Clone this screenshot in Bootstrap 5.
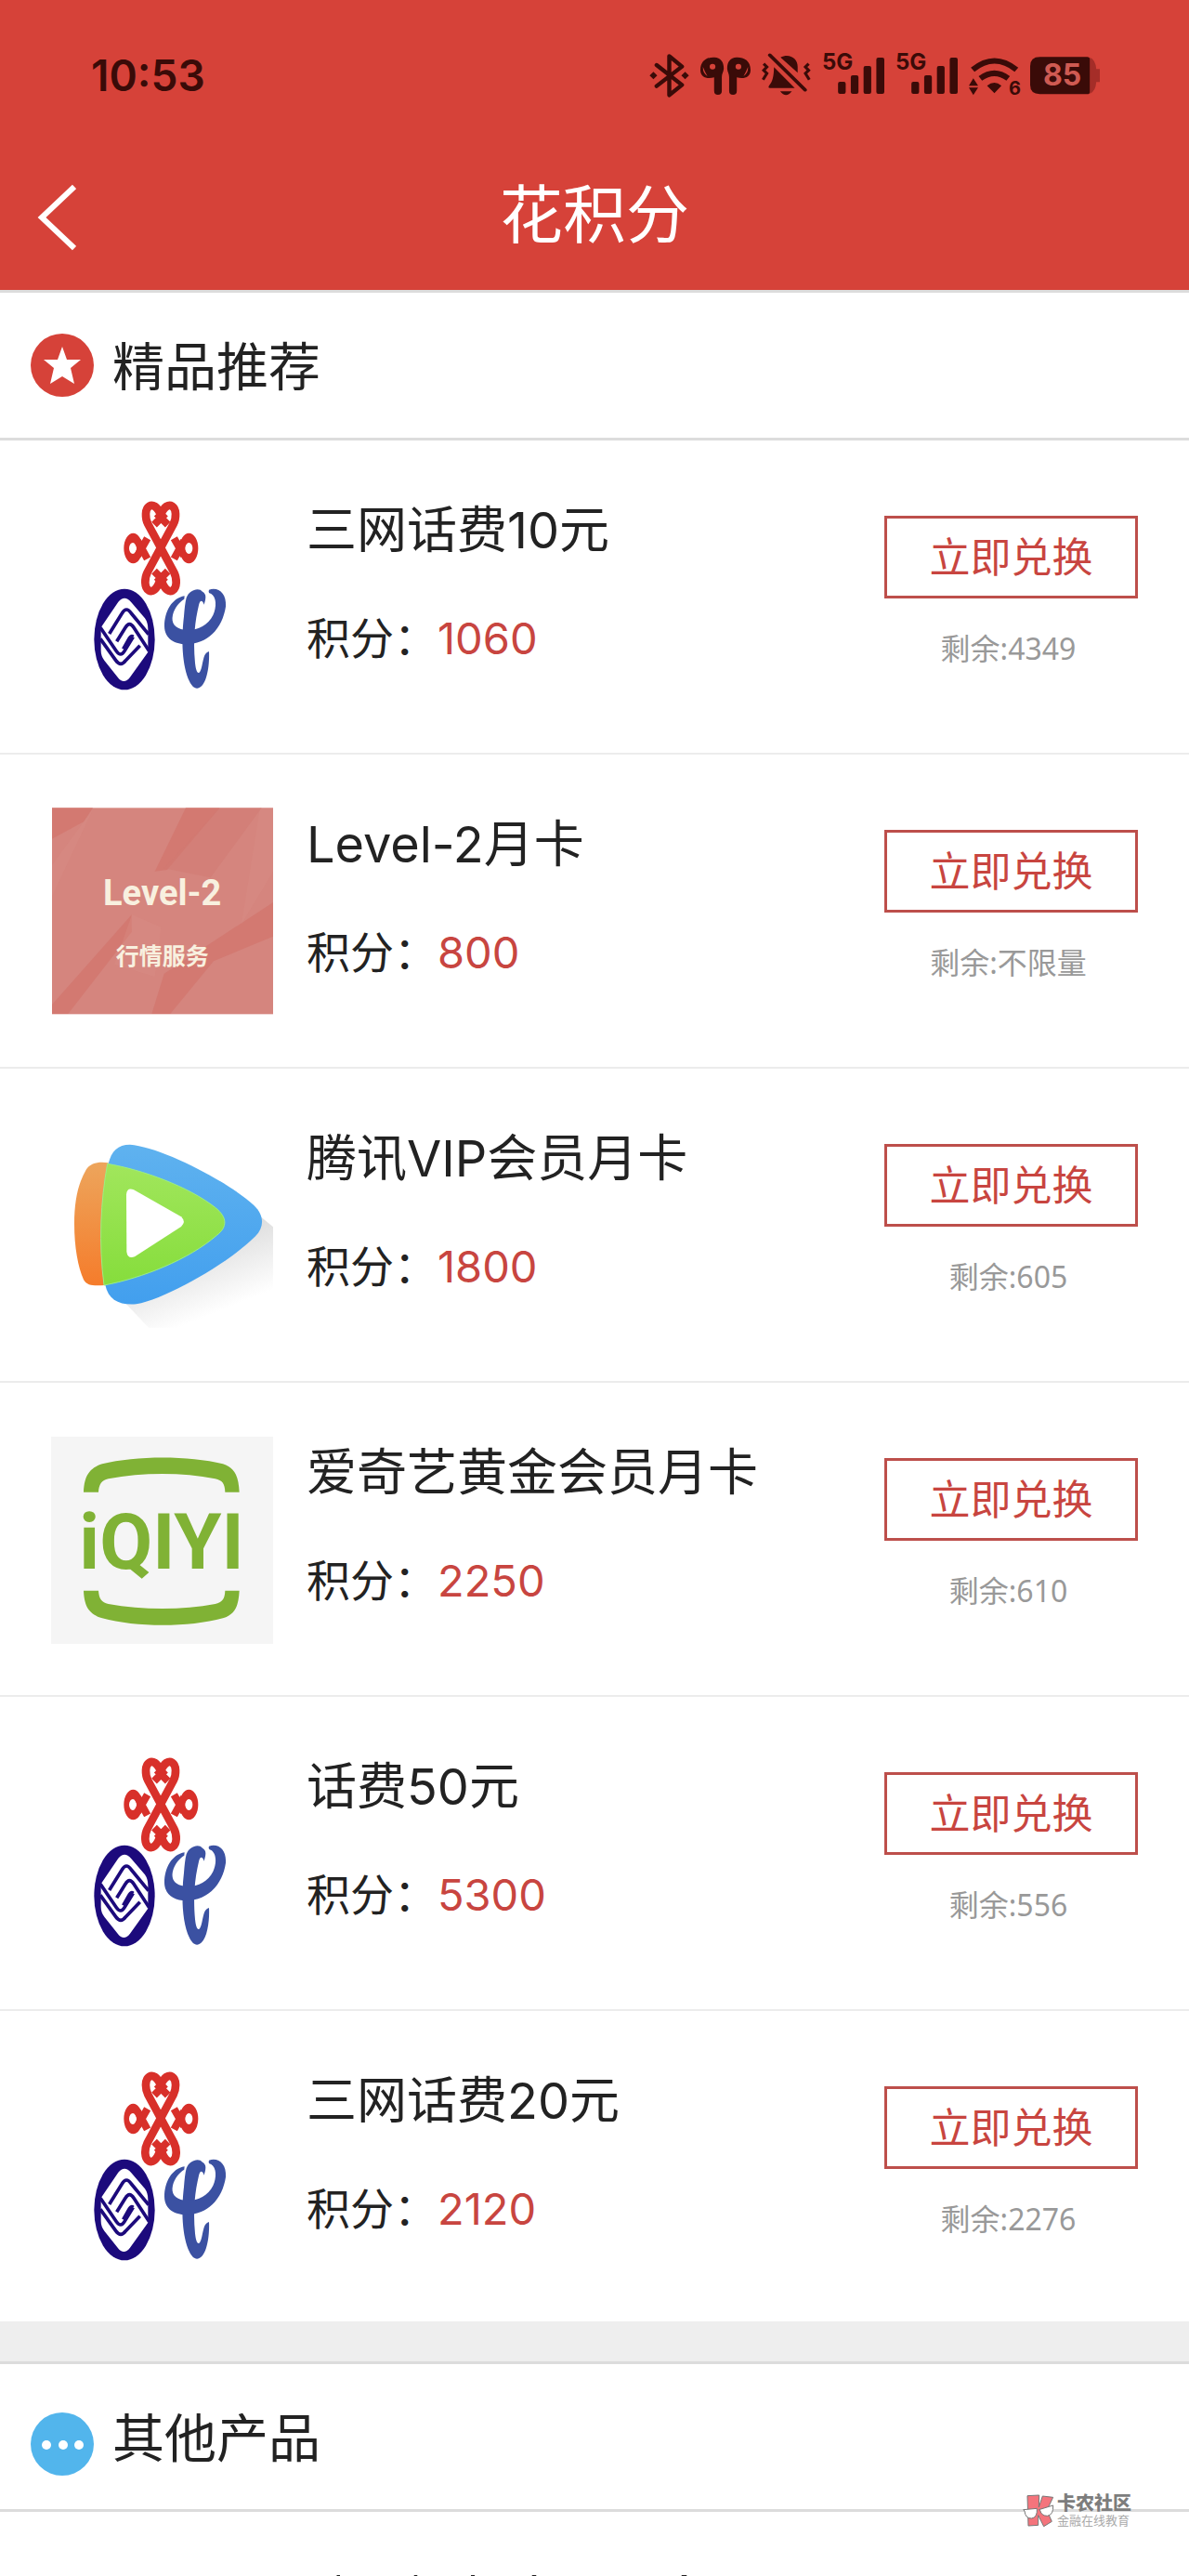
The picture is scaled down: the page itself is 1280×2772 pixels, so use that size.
<!DOCTYPE html>
<html lang="zh-CN">
<head>
<meta charset="utf-8">
<meta name="viewport" content="width=device-width, initial-scale=1">
<title>花积分</title>
<link href="https://cdn.jsdelivr.net/npm/bootstrap@5.3.0/dist/css/bootstrap.min.css" rel="stylesheet">
<style>
  body { font-family: Inter, "Noto Sans CJK SC", sans-serif; color: #222; background: #fff; }
  .app-top { background: #d64239; }
  .status-bar { height: 150px; padding: 12px 96px 0 98px; color: #3a0b08; }
  .clock { font-size: 46px; line-height: 60px; font-weight: 600; }
  .status-bar svg { height: 48px; fill: currentColor; display: block; }
  .status-icons { gap: 12px; }
  .signal-wrap { width: 67px; }
  .signal-wrap span { position: absolute; left: 0; top: -2px; font-size: 24px; line-height: 24px; font-weight: 700; }
  .battery-wrap span { position: absolute; left: 14px; top: 4px; font-size: 32px; line-height: 40px; font-weight: 700; color: #cf5a52; }
  .wifi-wrap span { position: absolute; right: -2px; bottom: 0; font-size: 20px; line-height: 20px; font-weight: 700; }
  .nav-head { display: grid; grid-template-columns: 120px 1fr 120px; height: 162px; }
  .nav-head h1 { font-size: 68px; line-height: 80px; font-weight: 400; }
  .back-link { padding: 6px 0 0 40px; }
  .section-head { border-top: 3px solid #dcdcdc; border-bottom: 3px solid #dcdcdc; height: 162px; padding: 0 33px; gap: 20px; }
  .section-head h2 { font-size: 56px; line-height: 72px; font-weight: 400; padding-top: 4px; }
  .goods { min-height: 338px; padding: 57px 55px 0; border-bottom: 2px solid #ececec; gap: 36px; }
  .goods:last-child { min-height: 334px; border-bottom: 0; }
  .goods-pic { width: 239px; height: 224px; flex: none; }
  .goods-info { padding-top: 6px; }
  .goods-info h3 { font-size: 54px; line-height: 68px; font-weight: 400; margin-bottom: 52px; }
  .goods-info p { font-size: 47px; line-height: 60px; }
  .red-num { color: #c84540; }
  .goods-side { width: 273px; padding-top: 24px; }
  .btn-swap { border: 3px solid #bd4f4b; border-radius: 0; color: #c84540; font-size: 44px; line-height: 60px; height: 89px; padding: 0; }
  .stock { font-family: "Noto Sans", "Noto Sans CJK SC", sans-serif; font-size: 32px; line-height: 40px; color: #999; margin-top: 34px; padding-right: 6px; }
  .band { height: 43px; background: #eee; }
  .maker { position: absolute; right: 62px; bottom: -20px; gap: 3px; color: #7d7d7d; }
  .maker b { font-size: 20px; line-height: 22px; font-weight: 900; }
  .maker small { font-size: 13px; line-height: 15px; color: #aaa; }
  .peek { padding-top: 67px; }
</style>
<script src="https://cdn.jsdelivr.net/npm/bootstrap@5.3.0/dist/js/bootstrap.bundle.min.js"></script>
</head>
<body>
<svg class="d-none" aria-hidden="true">
  <symbol id="carriers" viewBox="-75 33 717 672">
    <g fill="none" stroke="#d8302a" stroke-width="26">
      <path d="M302 134 L266 98 M258 134 L294 98" stroke-width="24"/>
      <path d="M281 106 C268 72 252 68 242 74 C228 82 228 112 238 132 L322 288 C332 308 332 338 318 346 C306 352 292 346 281 312"/>
      <path d="M277 106 C290 72 306 68 316 74 C330 82 330 112 320 132 L236 288 C226 308 226 338 240 346 C252 352 266 346 277 312"/>
      <path d="M302 284 L266 320 M258 284 L294 320" stroke-width="24"/>
      <path d="M204 234 L236 178 M204 186 L236 244" stroke-width="24"/>
      <path d="M354 234 L322 178 M354 186 L322 244" stroke-width="24"/>
    </g>
    <path fill="#d8302a" fill-rule="evenodd" d="M160 210 a30 49 0 1 1 60 0 a30 49 0 1 1 -60 0z M177 210 a12 18 0 1 0 24 0 a12 18 0 1 0 -24 0z M340 210 a30 49 0 1 1 60 0 a30 49 0 1 1 -60 0z M358 210 a12 18 0 1 0 24 0 a12 18 0 1 0 -24 0z"/>
    <ellipse cx="162" cy="504" rx="98" ry="163" fill="#1c0a7c"/>
    <path fill="#fff" d="M86 466 L142 383 Q162 360 183 383 L228 436 Q238 450 238 470 V545 L180 626 Q160 652 140 626 L97 572 Q86 558 86 540 Z"/>
    <g fill="none" stroke="#1c0a7c" stroke-width="11" stroke-linejoin="round">
      <path d="M113 486 L154 420 Q168 396 184 420 L240 488"/>
      <path d="M137 511 L165 466 Q178 444 192 466 L242 542"/>
      <path d="M158 535 L178 500 Q184 490 190 496"/>
      <path d="M84 466 L136 542 Q150 562 162 542 L190 496"/>
      <path d="M84 502 L134 572 Q150 594 166 572 L212 524"/>
    </g>
    <g fill="#3b51a2">
      <path d="M362 370 C370 345 402 334 414 350 C428 358 425 372 419 392 C414 377 406 376 402 394 C390 445 383 500 390 580 C394 620 405 622 412 590 C419 558 420 548 435 543 C437 580 431 635 411 655 C396 669 382 661 372 640 C348 590 345 505 354 430 C356 405 358 385 362 370 Z"/>
      <path d="M356 364 C315 371 291 414 291 462 C292 503 325 519 360 520 C430 519 478 470 489 398 C492 355 465 334 435 344 C432 352 436 356 441 356 C460 367 460 400 448 426 C430 463 390 478 355 473 C325 468 312 452 318 425 C324 401 339 384 355 374 Z"/>
    </g>
  </symbol>
  <symbol id="bars" viewBox="595 78 195 144" preserveAspectRatio="none"><rect x="645" y="171" width="24" height="39" rx="6"/><rect x="685" y="150" width="24" height="60" rx="6"/><rect x="725" y="120" width="24" height="90" rx="6"/><rect x="765" y="93" width="25" height="117" rx="6"/></symbol>
</svg>

<header class="app-top">
  <div class="status-bar d-flex align-items-center justify-content-between">
    <span class="clock">10:53</span>
    <div class="status-icons d-flex align-items-center">
      <svg width="43" viewBox="59 78 126 144" preserveAspectRatio="none" aria-hidden="true">
        <path d="M82 117 L162 181 L122 214 V88 L162 122 L82 185" fill="none" stroke="currentColor" stroke-width="13" stroke-linejoin="round" stroke-linecap="round"/>
        <path d="M60 151 l12 -12 12 12 -12 12z M160 151 l12 -12 12 12 -12 12z"/>
      </svg>
      <svg width="54" viewBox="218 78 157 144" preserveAspectRatio="none" aria-hidden="true">
        <path d="M218 133 C218 102 240 91 262 92 C282 93 292 108 291 130 C290 140 285 146 285 156 V200 Q285 213 273 213 Q261 213 261 200 V157 C240 163 218 158 218 133 Z M375 133 C375 102 353 91 331 92 C311 93 301 108 302 130 C303 140 308 146 308 156 V200 Q308 213 320 213 Q332 213 332 200 V157 C353 163 375 158 375 133 Z"/>
        <g fill="#d64239"><circle cx="256" cy="122" r="9"/><circle cx="337" cy="122" r="9"/><path d="M226 123 q-1 20 14 30 q-8 -14 -14 -30z M367 123 q1 20 -14 30 q8 -14 14 -30z"/></g>
      </svg>
      <svg width="53" viewBox="418 78 152 144" preserveAspectRatio="none" aria-hidden="true">
        <path d="M476 92 C504 78 529 96 529 122 V142 Z M456 124 L520 191 H444 Q436 191 441 183 C452 170 455 155 456 124 Z M475 202 H511 Q493 226 475 202 Z"/>
        <path d="M443 85 L552 197" fill="none" stroke="currentColor" stroke-width="11" stroke-linecap="round"/>
        <path d="M424 113 l10 10 -10 11 10 10 -12 20 M563 113 l-10 10 10 11 -10 10 12 20" fill="none" stroke="currentColor" stroke-width="9"/>
      </svg>
      <div class="signal-wrap position-relative"><span>5G</span><svg width="67" aria-hidden="true"><use href="#bars"/></svg></div>
      <div class="signal-wrap position-relative"><span>5G</span><svg width="67" aria-hidden="true"><use href="#bars"/></svg></div>
      <div class="wifi-wrap position-relative"><span>6</span>
        <svg width="54" viewBox="1048 78 157 144" preserveAspectRatio="none" aria-hidden="true">
          <path d="M1060 132 Q1128 75 1197 132 M1084 160 Q1128 127 1171 160" fill="none" stroke="currentColor" stroke-width="18"/>
          <path d="M1105 184 Q1128 164 1150 184 L1128 208 Z M1048 184 L1062 160 L1077 184 Z M1048 190 L1062 214 L1077 190 Z"/>
        </svg>
      </div>
      <div class="battery-wrap position-relative">
        <svg width="75" viewBox="1247 78 216 144" preserveAspectRatio="none" aria-hidden="true">
          <path d="M1432 92 Q1450 100 1452 130 H1463 V172 H1452 Q1450 202 1432 210 Z" fill="#a52d28"/>
          <path d="M1277 91 H1424 Q1432 91 1432 99 V203 Q1432 211 1424 211 H1277 Q1247 211 1247 181 V121 Q1247 91 1277 91 Z"/>
        </svg><span>85</span>
      </div>
    </div>
  </div>
  <nav class="nav-head align-items-center" aria-label="页面">
    <a class="back-link" href="#" aria-label="返回"><svg class="d-block" width="42" height="72" viewBox="0 0 42 72" fill="none" stroke="#fff" stroke-width="6" aria-hidden="true"><path d="M40 3 L5 36 L40 69"/></svg></a>
    <h1 class="text-white text-center m-0">花积分</h1>
  </nav>
</header>

<main>
  <section>
    <div class="section-head d-flex align-items-center">
      <svg width="68" height="68" viewBox="0 0 68 68" aria-hidden="true"><circle cx="34" cy="34" r="34" fill="#d64239"/><path fill="#fff" d="M34 14 L39 28 L54 28 L43 37 L47 54 L34 46 L21 54 L25 37 L14 28 L29 28 Z"/></svg>
      <h2 class="m-0">精品推荐</h2>
    </div>
    <div>
      <article class="goods d-flex align-items-start">
        <svg class="goods-pic" aria-hidden="true"><use href="#carriers"/></svg>
        <div class="goods-info flex-grow-1"><h3>三网话费10元</h3><p class="m-0">积分：<span class="red-num">1060</span></p></div>
        <div class="goods-side text-center"><button type="button" class="btn btn-swap w-100 d-block">立即兑换</button><div class="stock">剩余:4349</div></div>
      </article>
      <article class="goods d-flex align-items-start">
        <svg class="goods-pic" viewBox="45 54 717 672" role="img" aria-label="Level-2 行情服务">
          <rect x="48" y="55" width="714" height="666" fill="#d5857e"/>
          <path fill="#d1766e" opacity=".75" d="M48 55 H180 L150 100 L48 155 Z M48 690 L305 400 L306 455 L100 720 H48 Z M370 720 L410 590 L762 360 V470 L570 550 L430 720 Z M480 55 H590 L420 255 L380 260 Z"/>
          <path fill="#d98f87" opacity=".35" d="M180 60 L48 340 V240 Z M720 55 L660 430 L762 260 V55 Z M306 400 L400 440 L380 600 L250 560 Z"/>
          <path fill="#d27a72" opacity=".5" d="M590 55 H725 L560 280 L410 250 Z"/>
          <text x="404" y="370" text-anchor="middle" font-family="Liberation Sans Narrow, Roboto, sans-serif" font-weight="700" font-size="114" fill="#f8f0df">Level-2</text>
          <text x="404" y="560" text-anchor="middle" font-family="Noto Sans CJK SC, sans-serif" font-weight="700" font-size="75" fill="#f8f0df">行情服务</text>
        </svg>
        <div class="goods-info flex-grow-1"><h3>Level-2月卡</h3><p class="m-0">积分：<span class="red-num">800</span></p></div>
        <div class="goods-side text-center"><button type="button" class="btn btn-swap w-100 d-block">立即兑换</button><div class="stock">剩余:不限量</div></div>
      </article>
      <article class="goods d-flex align-items-start">
        <svg class="goods-pic" viewBox="-15 -15 717 672" aria-hidden="true">
          <defs>
            <linearGradient id="gOrange" x1="0" y1="0" x2="0" y2="1"><stop offset="0" stop-color="#eda55c"/><stop offset="1" stop-color="#f57c2b"/></linearGradient>
            <linearGradient id="gBlue" x1="0" y1="0" x2="0" y2="1"><stop offset="0" stop-color="#5fb2ef"/><stop offset="1" stop-color="#429fee"/></linearGradient>
            <linearGradient id="gGreen" x1="0" y1="0" x2="0" y2="1"><stop offset="0" stop-color="#a1e65c"/><stop offset="1" stop-color="#86dd3c"/></linearGradient>
            <linearGradient id="gShade" x1=".35" y1=".3" x2=".65" y2=".85"><stop offset="0" stop-color="#dcdcdc"/><stop offset="1" stop-color="#fff"/></linearGradient>
          </defs>
          <path fill="url(#gShade)" d="M215 560 L300 650 H702 V325 L660 290 Z"/>
          <path fill="url(#gOrange)" d="M170 118 C140 113 112 118 98 140 C72 185 60 240 60 315 C60 390 72 455 90 495 C102 518 130 514 160 513 Z"/>
          <path fill="url(#gBlue)" d="M170 120 C180 80 200 59 240 59 C340 66 560 180 640 255 C674 288 674 325 645 355 C560 440 360 555 260 574 C205 578 170 560 160 512 Z"/>
          <path fill="url(#gGreen)" stroke="#9cee84" stroke-width="3" d="M167 121 C280 140 430 195 515 262 C555 294 555 325 520 352 C430 430 280 490 156 513 C138 380 145 240 167 121 Z"/>
          <path fill="#fff" d="M228 220 Q230 196 252 205 L405 292 Q422 308 405 324 L255 421 Q232 429 229 405 Z"/>
        </svg>
        <div class="goods-info flex-grow-1"><h3>腾讯VIP会员月卡</h3><p class="m-0">积分：<span class="red-num">1800</span></p></div>
        <div class="goods-side text-center"><button type="button" class="btn btn-swap w-100 d-block">立即兑换</button><div class="stock">剩余:605</div></div>
      </article>
      <article class="goods d-flex align-items-start">
        <svg class="goods-pic" viewBox="45 36 717 672" role="img" aria-label="iQIYI">
          <rect x="45" y="39" width="717" height="669" fill="#f5f5f5"/>
          <g fill="#80b235">
            <path d="M150 218 C152 165 170 140 210 127 C320 100 490 100 600 127 C638 140 650 165 653 218 H607 C606 190 598 180 575 175 C470 154 340 154 230 175 C208 180 200 192 198 218 Z"/>
            <path d="M150 536 C152 590 170 612 210 625 C320 655 490 655 600 625 C638 612 650 590 653 536 H607 C606 562 598 574 575 579 C470 599 340 599 230 579 C208 574 200 562 198 536 Z"/>
            <text x="402" y="466" text-anchor="middle" font-family="Liberation Sans Narrow, Roboto, sans-serif" font-weight="700" font-size="248">iQIYI</text>
          </g>
        </svg>
        <div class="goods-info flex-grow-1"><h3>爱奇艺黄金会员月卡</h3><p class="m-0">积分：<span class="red-num">2250</span></p></div>
        <div class="goods-side text-center"><button type="button" class="btn btn-swap w-100 d-block">立即兑换</button><div class="stock">剩余:610</div></div>
      </article>
      <article class="goods d-flex align-items-start">
        <svg class="goods-pic" aria-hidden="true"><use href="#carriers"/></svg>
        <div class="goods-info flex-grow-1"><h3>话费50元</h3><p class="m-0">积分：<span class="red-num">5300</span></p></div>
        <div class="goods-side text-center"><button type="button" class="btn btn-swap w-100 d-block">立即兑换</button><div class="stock">剩余:556</div></div>
      </article>
      <article class="goods d-flex align-items-start">
        <svg class="goods-pic" aria-hidden="true"><use href="#carriers"/></svg>
        <div class="goods-info flex-grow-1"><h3>三网话费20元</h3><p class="m-0">积分：<span class="red-num">2120</span></p></div>
        <div class="goods-side text-center"><button type="button" class="btn btn-swap w-100 d-block">立即兑换</button><div class="stock">剩余:2276</div></div>
      </article>
    </div>
  </section>
  <div class="band"></div>
  <section>
    <div class="section-head d-flex align-items-center position-relative">
      <svg class="mt-3" width="68" height="68" viewBox="0 0 68 68" aria-hidden="true"><circle cx="34" cy="34" r="34" fill="#52b5ec"/><g fill="#fff"><circle cx="17" cy="35" r="5"/><circle cx="35" cy="35" r="5"/><circle cx="52" cy="35" r="5"/></g></svg>
      <h2 class="m-0">其他产品</h2>
      <div class="maker d-flex align-items-center">
        <svg width="34" height="36" viewBox="0 0 102 108" aria-hidden="true">
          <g stroke="#777" stroke-width="3"><path fill="#f4747c" d="M15 5 L53 3 L52 42 L64 6 L98 10 L78 52 L94 88 L68 104 L50 68 L50 100 L18 102 Z"/>
          <path fill="#fff" d="M2 50 L46 46 Q48 76 28 78 Q8 78 6 54 Z M52 50 L98 36 Q100 66 80 70 Q60 70 56 52 Z"/></g>
        </svg>
        <div class="d-flex flex-column"><b>卡农社区</b><small>金融在线教育</small></div>
      </div>
    </div>
    <div class="peek"><svg class="d-block w-100" height="3" viewBox="0 0 1280 3" preserveAspectRatio="none" fill="#222" aria-hidden="true"><path d="M361 3 l2 -2 h3 v2z M445 3 l1 -2 h3 l1 2z M507 3 v-2 h4 v2z M572 3 l1 -2 h4 l1 2z M700 3 v-1 h3 v1z M733 3 l1 -2 h5 l1 2z"/></svg></div>
  </section>
</main>
</body>
</html>
